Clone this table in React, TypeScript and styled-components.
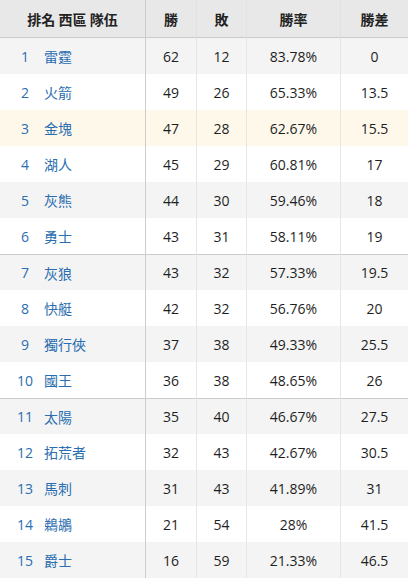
import styled, { createGlobalStyle } from "styled-components";

interface ITeam {
  name: string;
  win: number;
  loss: number;
  pct: string;
  gb: string;
}

const teams: ITeam[] = [
  { name: "雷霆", win: 62, loss: 12, pct: "83.78%", gb: "0" },
  { name: "火箭", win: 49, loss: 26, pct: "65.33%", gb: "13.5" },
  { name: "金塊", win: 47, loss: 28, pct: "62.67%", gb: "15.5" },
  { name: "湖人", win: 45, loss: 29, pct: "60.81%", gb: "17" },
  { name: "灰熊", win: 44, loss: 30, pct: "59.46%", gb: "18" },
  { name: "勇士", win: 43, loss: 31, pct: "58.11%", gb: "19" },
  { name: "灰狼", win: 43, loss: 32, pct: "57.33%", gb: "19.5" },
  { name: "快艇", win: 42, loss: 32, pct: "56.76%", gb: "20" },
  { name: "獨行俠", win: 37, loss: 38, pct: "49.33%", gb: "25.5" },
  { name: "國王", win: 36, loss: 38, pct: "48.65%", gb: "26" },
  { name: "太陽", win: 35, loss: 40, pct: "46.67%", gb: "27.5" },
  { name: "拓荒者", win: 32, loss: 43, pct: "42.67%", gb: "30.5" },
  { name: "馬刺", win: 31, loss: 43, pct: "41.89%", gb: "31" },
  { name: "鵜鶘", win: 21, loss: 54, pct: "28%", gb: "41.5" },
  { name: "爵士", win: 16, loss: 59, pct: "21.33%", gb: "46.5" },
];

// playoff / play-in cut lines
const groupStarts = [6, 10];

const GlobalStyle = createGlobalStyle`
  body {
    margin: 0;
    background: #ffffff;
    font-family: "Open Sans", "Noto Sans CJK TC", sans-serif;
  }
`;

export default function App() {
  return (
    <>
      <GlobalStyle />
      <Table>
        <colgroup>
          <col style={{ width: 146 }} />
          <col style={{ width: 51 }} />
          <col style={{ width: 50 }} />
          <col style={{ width: 94 }} />
          <col style={{ width: 67 }} />
        </colgroup>
        <thead>
          <HeadRow>
            <Th $first>排名 西區 隊伍</Th>
            <Th>勝</Th>
            <Th>敗</Th>
            <Th>勝率</Th>
            <Th $last>勝差</Th>
          </HeadRow>
        </thead>
        <tbody>
          {teams.map((t, i) => (
            <Row
              key={t.name + i}
              $odd={i % 2 === 0}
              $highlight={i === 2}
              $groupStart={groupStarts.includes(i)}
            >
              <Td $first>
                <TeamCell>
                  <Rank>{i + 1}</Rank>
                  <TeamName>{t.name}</TeamName>
                </TeamCell>
              </Td>
              <Td>{t.win}</Td>
              <Td>{t.loss}</Td>
              <Td>{t.pct}</Td>
              <Td $last>{t.gb}</Td>
            </Row>
          ))}
        </tbody>
      </Table>
    </>
  );
}

const Table = styled.table`
  width: 408px;
  table-layout: fixed;
  border-collapse: separate;
  border-spacing: 0;
  font-size: 14px;
  color: #1f1f1f;
`;

const HeadRow = styled.tr`
  height: 38px;
  background: #e8e8e8;
`;

const Th = styled.th<{ $first?: boolean; $last?: boolean }>`
  box-sizing: border-box;
  padding: 0;
  font-weight: 700;
  font-family: "Noto Sans CJK TC", sans-serif;
  color: #222222;
  text-align: center;
  border-bottom: 1px solid #cccccc;
  border-right: ${({ $first, $last }) =>
    $last ? "none" : $first ? "1px solid #cccccc" : "1px solid #e2e2e2"};
`;

const Row = styled.tr<{ $odd: boolean; $highlight: boolean; $groupStart: boolean }>`
  height: 36px;
  background: ${({ $odd, $highlight }) =>
    $highlight ? "#fef8eb" : $odd ? "#f4f4f4" : "#ffffff"};

  td {
    border-top: ${({ $groupStart }) => ($groupStart ? "1px solid #cccccc" : "none")};
  }
`;

const Td = styled.td<{ $first?: boolean; $last?: boolean }>`
  box-sizing: border-box;
  padding: 0;
  text-align: center;
  border-right: ${({ $first, $last }) =>
    $last ? "none" : $first ? "1px solid #cccccc" : "1px solid #e6e6e6"};
`;

const TeamCell = styled.div`
  display: flex;
  align-items: center;
  gap: 6px;
  padding-left: 12px;
  color: #2a6db0;
`;

const Rank = styled.span`
  width: 26px;
  text-align: center;
`;

const TeamName = styled.span`
  font-family: "Noto Sans CJK TC", sans-serif;
`;
